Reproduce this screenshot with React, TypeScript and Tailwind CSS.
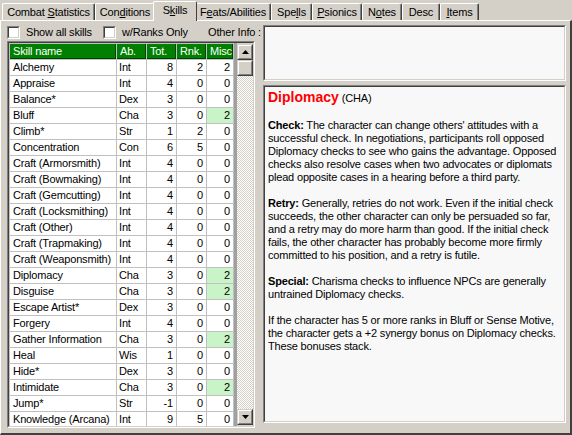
import { ReactNode } from "react";
import clsx from "clsx";

type Skill = {
  name: string;
  ability: string;
  total: number;
  ranks: number;
  misc: number;
  synergy?: boolean;
};

const skills: Skill[] = [
  { name: "Alchemy", ability: "Int", total: 8, ranks: 2, misc: 2 },
  { name: "Appraise", ability: "Int", total: 4, ranks: 0, misc: 0 },
  { name: "Balance*", ability: "Dex", total: 3, ranks: 0, misc: 0 },
  { name: "Bluff", ability: "Cha", total: 3, ranks: 0, misc: 2, synergy: true },
  { name: "Climb*", ability: "Str", total: 1, ranks: 2, misc: 0 },
  { name: "Concentration", ability: "Con", total: 6, ranks: 5, misc: 0 },
  { name: "Craft (Armorsmith)", ability: "Int", total: 4, ranks: 0, misc: 0 },
  { name: "Craft (Bowmaking)", ability: "Int", total: 4, ranks: 0, misc: 0 },
  { name: "Craft (Gemcutting)", ability: "Int", total: 4, ranks: 0, misc: 0 },
  { name: "Craft (Locksmithing)", ability: "Int", total: 4, ranks: 0, misc: 0 },
  { name: "Craft (Other)", ability: "Int", total: 4, ranks: 0, misc: 0 },
  { name: "Craft (Trapmaking)", ability: "Int", total: 4, ranks: 0, misc: 0 },
  { name: "Craft (Weaponsmith)", ability: "Int", total: 4, ranks: 0, misc: 0 },
  { name: "Diplomacy", ability: "Cha", total: 3, ranks: 0, misc: 2, synergy: true },
  { name: "Disguise", ability: "Cha", total: 3, ranks: 0, misc: 2, synergy: true },
  { name: "Escape Artist*", ability: "Dex", total: 3, ranks: 0, misc: 0 },
  { name: "Forgery", ability: "Int", total: 4, ranks: 0, misc: 0 },
  { name: "Gather Information", ability: "Cha", total: 3, ranks: 0, misc: 2, synergy: true },
  { name: "Heal", ability: "Wis", total: 1, ranks: 0, misc: 0 },
  { name: "Hide*", ability: "Dex", total: 3, ranks: 0, misc: 0 },
  { name: "Intimidate", ability: "Cha", total: 3, ranks: 0, misc: 2, synergy: true },
  { name: "Jump*", ability: "Str", total: -1, ranks: 0, misc: 0 },
  { name: "Knowledge (Arcana)", ability: "Int", total: 9, ranks: 5, misc: 0 },
];

// hotkey = index of the underlined mnemonic letter, -1 for none
const tabs = [
  { label: "Combat Statistics", hotkey: 7, width: "w-[93px]" },
  { label: "Conditions", hotkey: 3, width: "w-[60px]" },
  { label: "Skills", hotkey: 1, width: "w-[44px]", active: true },
  { label: "Feats/Abilities", hotkey: 1, width: "w-[76px]" },
  { label: "Spells", hotkey: 3, width: "w-[41px]" },
  { label: "Psionics", hotkey: 0, width: "w-[50px]" },
  { label: "Notes", hotkey: 1, width: "w-[40px]" },
  { label: "Desc", hotkey: -1, width: "w-[38px]" },
  { label: "Items", hotkey: 0, width: "w-[39px]" },
];

const description: { label: string; lines: string[] }[] = [
  {
    label: "Check:",
    lines: [
      " The character can change others' attitudes with a",
      "successful check. In negotiations, participants roll opposed",
      "Diplomacy checks to see who gains the advantage. Opposed",
      "checks also resolve cases when two advocates or diplomats",
      "plead opposite cases in a hearing before a third party.",
    ],
  },
  {
    label: "Retry:",
    lines: [
      " Generally, retries do not work. Even if the initial check",
      "succeeds, the other character can only be persuaded so far,",
      "and a retry may do more harm than good. If the initial check",
      "fails, the other character has probably become more firmly",
      "committed to his position, and a retry is futile.",
    ],
  },
  {
    label: "Special:",
    lines: [
      " Charisma checks to influence NPCs are generally",
      "untrained Diplomacy checks.",
    ],
  },
  {
    label: "",
    lines: [
      "If the character has 5 or more ranks in Bluff or Sense Motive,",
      "the character gets a +2 synergy bonus on Diplomacy checks.",
      "These bonuses stack.",
    ],
  },
];

const cols = "grid grid-cols-[106px_29px_29px_29px_26px] gap-x-px";

function Mnemonic({ text, at }: { text: string; at: number }) {
  if (at < 0) return <span className="whitespace-pre">{text}</span>;
  return (
    <span className="whitespace-pre">
      {text.slice(0, at)}
      <span className="underline underline-offset-[1px]">{text[at]}</span>
      {text.slice(at + 1)}
    </span>
  );
}

function Sunken({
  className,
  inner,
  children,
}: {
  className?: string;
  inner?: string;
  children?: ReactNode;
}) {
  return (
    <div
      className={clsx(
        "border border-t-[#808080] border-l-[#808080] border-r-white border-b-white",
        className,
      )}
    >
      <div
        className={clsx(
          "h-full border border-t-[#404040] border-l-[#404040] border-r-[#d4d0c8] border-b-[#d4d0c8]",
          inner,
        )}
      >
        {children}
      </div>
    </div>
  );
}

function Raised({ className, children }: { className?: string; children?: ReactNode }) {
  return (
    <div
      className={clsx(
        "border border-t-[#d4d0c8] border-l-[#d4d0c8] border-r-[#404040] border-b-[#404040]",
        className,
      )}
    >
      <div className="h-full flex items-center justify-center bg-[#d4d0c8] border border-t-white border-l-white border-r-[#808080] border-b-[#808080]">
        {children}
      </div>
    </div>
  );
}

function Arrow({ down }: { down?: boolean }) {
  return (
    <svg width="7" height="4" viewBox="0 0 7 4">
      <polygon points={down ? "0,0 7,0 3.5,4" : "3.5,0 7,4 0,4"} fill="#000" />
    </svg>
  );
}

function Checkbox({ label, className }: { label: string; className?: string }) {
  return (
    <div className={clsx("flex items-center", className)}>
      <Sunken className="w-[13px] h-[13px]" inner="bg-white" />
      <span className="ml-[6px]">{label}</span>
    </div>
  );
}

function SkillGrid() {
  return (
    <div className="w-[225px] h-full overflow-hidden flex flex-col gap-y-px bg-[#c0c0c0] p-px pb-0">
      <div className={clsx(cols, "h-[15px] leading-[15px] text-white")}>
        {["Skill name", "Ab.", "Tot.", "Rnk.", "Misc"].map((h) => (
          <div key={h} className="bg-[#008000] pl-[3px] shadow-[inset_-1px_-1px_0_#004000]">
            {h}
          </div>
        ))}
      </div>
      {skills.map((s) => (
        <div key={s.name} className={clsx(cols, "h-[15px] leading-[15px] shrink-0")}>
          <div className="bg-white pl-[3px] whitespace-nowrap">{s.name}</div>
          <div className="bg-white pl-[2px]">{s.ability}</div>
          <div className="bg-white text-right pr-[3px]">{s.total}</div>
          <div className="bg-white text-right pr-[3px]">{s.ranks}</div>
          <div
            className={clsx(
              "text-right pr-[3px]",
              s.synergy ? "bg-[#c8f4c8]" : "bg-white",
            )}
          >
            {s.misc}
          </div>
        </div>
      ))}
    </div>
  );
}

function ScrollBar() {
  return (
    <div className="w-[16px] h-full flex flex-col pt-px">
      <Raised className="h-[16px] shrink-0">
        <Arrow />
      </Raised>
      <div className="flex-1 flex flex-col bg-[repeating-conic-gradient(#d4d0c8_0%_25%,#ffffff_0%_50%)] bg-[length:2px_2px]">
        <Raised className="h-[16px] shrink-0" />
      </div>
      <Raised className="h-[16px] shrink-0 mb-[1px]">
        <Arrow down />
      </Raised>
    </div>
  );
}

export default function App() {
  return (
    <div className="w-[572px] h-[435px] overflow-hidden bg-[#d4d0c8] text-black text-[11px] tracking-[-0.17px] font-['Liberation_Sans',Arial,sans-serif] select-none">
      <div className="flex items-end h-[20px] pl-[2px]">
        {tabs.map((t) =>
          t.active ? (
            <div
              key={t.label}
              className={clsx(
                t.width,
                "relative z-10 -mx-[2px] -mb-px h-[20px] pb-[2px] bg-[#d4d0c8] flex items-center justify-center border-l border-t border-white border-r border-r-[#404040] rounded-t-[2px]",
              )}
            >
              <Mnemonic text={t.label} at={t.hotkey} />
            </div>
          ) : (
            <div
              key={t.label}
              className={clsx(
                t.width,
                "h-[17px] flex items-center justify-center border-l border-t border-white border-r border-r-[#404040] shadow-[inset_-1px_0_0_#808080] rounded-t-[2px]",
              )}
            >
              <Mnemonic text={t.label} at={t.hotkey} />
            </div>
          ),
        )}
      </div>

      <div className="h-[415px] flex border-t border-l border-white border-r-2 border-b-2 border-r-[#404040] border-b-[#404040]">
        <div className="w-[262px] pl-[6px] pt-[5px]">
          <div className="flex items-center h-[13px] whitespace-nowrap">
            <Checkbox label="Show all skills" className="w-[96px]" />
            <Checkbox label="w/Ranks Only" className="w-[105px]" />
            <span>Other Info :</span>
          </div>
          <Sunken className="mt-[2px] w-[248px] h-[387px]" inner="flex">
            <SkillGrid />
            <div className="w-[3px] h-full bg-[#a0a0a0]" />
            <ScrollBar />
          </Sunken>
        </div>

        <div className="w-[303px] pt-[4px]">
          <Sunken className="h-[56px]" inner="bg-[#f8f8f8]" />
          <Sunken className="mt-[4px] h-[338px]" inner="bg-[#f8f8f8] pl-[3px] pt-[2px] leading-[13px] whitespace-nowrap">
            <div className="leading-[16px] mb-[13px]">
              <span className="text-[14px] font-bold text-[#ff0000] tracking-[0px]">Diplomacy</span>{" "}
              (CHA)
            </div>
            {description.map((p, i) => (
              <div key={i} className="mb-[13px]">
                {p.lines.map((line, j) => (
                  <div key={j} className="whitespace-pre">
                    {j === 0 && p.label && <b>{p.label}</b>}
                    {line}
                  </div>
                ))}
              </div>
            ))}
          </Sunken>
        </div>
      </div>
    </div>
  );
}
